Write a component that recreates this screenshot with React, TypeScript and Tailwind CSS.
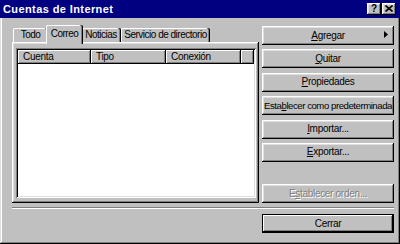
import React from 'react'

// Win98-ish bevels
const raised =
  'shadow-[inset_-1px_-1px_#000,inset_1px_1px_#fff,inset_-2px_-2px_#808080,inset_2px_2px_#dfdfdf]'
const raisedThin = 'shadow-[inset_-1px_-1px_#000,inset_1px_1px_#fff,inset_-2px_-2px_#808080]'
const sunken =
  'shadow-[inset_1px_1px_#808080,inset_-1px_-1px_#fff,inset_2px_2px_#000,inset_-2px_-2px_#dfdfdf]'
const tabEdge =
  'shadow-[inset_-1px_0_#000,inset_-2px_0_#808080,inset_1px_0_#fff,inset_0_1px_#fff]'

type BtnProps = {
  children: React.ReactNode
  disabled?: boolean
  isDefault?: boolean
  arrow?: boolean
  className?: string
}

const Btn = ({ children, disabled, isDefault, arrow, className = '' }: BtnProps) => (
  <div
    className={`relative h-[19px] flex items-center justify-center bg-[#c0c0c0] ${
      isDefault ? 'border border-black ' + raisedThin : raised
    } ${disabled ? 'text-[#808080] [text-shadow:1px_1px_0_#fff]' : 'text-black'} ${className}`}
  >
    <span className="leading-none whitespace-nowrap">{children}</span>
    {arrow && (
      <svg className="absolute right-[6px] top-[5px]" width="4" height="7" viewBox="0 0 4 7">
        <path d="M0 0L4 3.5L0 7z" fill="#000" />
      </svg>
    )}
  </div>
)

const Tab = ({ label, selected, w }: { label: string; selected?: boolean; w: string }) => (
  <div
    className={`flex items-center justify-center bg-[#c0c0c0] rounded-t-[2px] tracking-[-0.5px] ${tabEdge} ${w} ${
      selected ? 'h-[19px] -mb-[2px] -mx-[2px] pb-[2px] relative z-10' : 'h-[14px]'
    }`}
  >
    <span className="leading-none whitespace-nowrap">{label}</span>
  </div>
)

const HeaderCell = ({ label, w }: { label: string; w: string }) => (
  <div className={`h-[14px] flex items-center pl-[5px] bg-[#c0c0c0] ${raisedThin} ${w}`}>
    <span className="leading-none">{label}</span>
  </div>
)

const App = () => {
  return (
    <div className="w-[400px] h-[244px] bg-[#c0c0c0] overflow-hidden font-['Liberation_Sans',Arial,sans-serif] text-[10px] tracking-[-0.3px] text-black shadow-[inset_-1px_-1px_#000,inset_1px_0_#dfdfdf,inset_-2px_-2px_#808080,inset_2px_0_#fff]">
      {/* title bar */}
      <div className="h-[18px] bg-[#000080] flex items-center justify-between pl-[3px] pr-[4px]">
        <span className="text-white font-bold text-[11px] tracking-[0.4px] leading-none">Cuentas de Internet</span>
        <div className="flex gap-[1px]">
          <div className={`w-[14px] h-[12px] flex items-center justify-center bg-[#c0c0c0] ${raised}`}>
            <span className="font-bold text-[10px] leading-none -mt-[1px]">?</span>
          </div>
          <div className={`w-[14px] h-[12px] flex items-center justify-center bg-[#c0c0c0] ${raised}`}>
            <svg width="8" height="7" viewBox="0 0 8 7" className="-mt-[1px]">
              <path d="M0.5 0.5L7.5 6.5M7.5 0.5L0.5 6.5" stroke="#000" strokeWidth="1.6" />
            </svg>
          </div>
        </div>
      </div>

      {/* body */}
      <div className="pl-[12px] pr-[6px] pt-[7px]">
        <div className="flex gap-[3px]">
          {/* tabs + panel */}
          <div className="w-[247px] flex flex-col">
            <div className="h-[17px] flex items-end pl-[1px]">
              <Tab label="Todo" w="w-[35px]" />
              <Tab label="Correo" w="w-[37px]" selected />
              <Tab label="Noticias" w="w-[40px]" />
              <Tab label="Servicio de directorio" w="w-[89px]" />
            </div>
            <div className={`h-[161px] bg-[#c0c0c0] pl-[4px] pt-[6px] pr-[3px] pb-[5px] flex ${raised}`}>
              <div className={`flex-1 bg-white p-[2px] flex flex-col ${sunken}`}>
                <div className="flex">
                  <HeaderCell label="Cuenta" w="w-[73px]" />
                  <HeaderCell label="Tipo" w="w-[75px]" />
                  <HeaderCell label="Conexión" w="w-[75px]" />
                  <HeaderCell label="" w="flex-1" />
                </div>
              </div>
            </div>
          </div>

          {/* buttons */}
          <div className="w-[132px] flex flex-col pt-[1px]">
            <div className="flex flex-col gap-[4.4px]">
              <Btn arrow>
                <u className="underline-offset-[1px]">A</u>gregar
              </Btn>
              <Btn>
                <u className="underline-offset-[1px]">Q</u>uitar
              </Btn>
              <Btn>
                <u className="underline-offset-[1px]">P</u>ropiedades
              </Btn>
              <Btn className="text-[9.6px] tracking-[-0.45px]">
                Esta<u className="underline-offset-[1px]">b</u>lecer como predeterminada
              </Btn>
              <Btn>
                <u className="underline-offset-[1px]">I</u>mportar...
              </Btn>
              <Btn>
                <u className="underline-offset-[1px]">E</u>xportar...
              </Btn>
            </div>
            <Btn disabled className="mt-auto">
              E<u className="underline-offset-[1px]">s</u>tablecer orden...
            </Btn>
          </div>
        </div>

        {/* etched separator */}
        <div className="mt-[4px] h-[2px] border-t border-t-[#808080] border-b border-b-white" />

        <div className="flex justify-end mt-[5px]">
          <Btn isDefault className="w-[132px]">
            Cerrar
          </Btn>
        </div>
      </div>
    </div>
  )
}

export default App
